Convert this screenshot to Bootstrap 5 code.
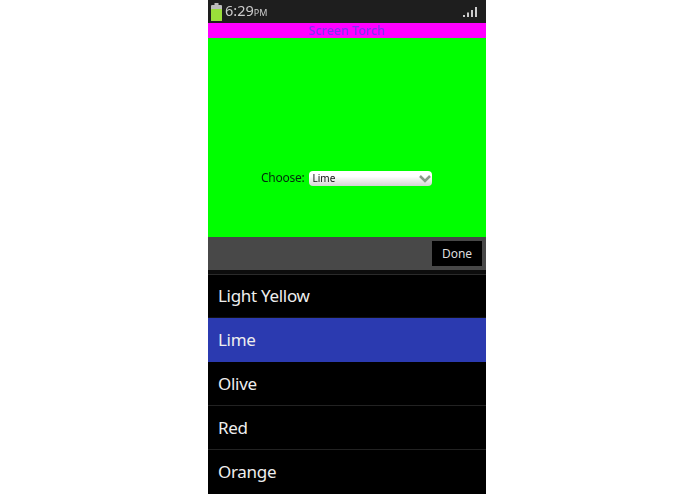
<!DOCTYPE html>
<html lang="en">
<head>
<meta charset="utf-8">
<title>Screen Torch</title>
<link href="https://cdn.jsdelivr.net/npm/bootstrap@5.3.0/dist/css/bootstrap.min.css" rel="stylesheet">
<style>
html, body { height: 100%; background: #fff; overflow: hidden; }
body { font-family: "Noto Sans", sans-serif; }
.phone { width: 278px; height: 494px; margin-left: 208px; filter: blur(0.35px); }
.statusbar { height: 23px; background: #1e1e1e; color: #ccc; padding: 0 9px 0 3px; }
.clock { font-size: 14.5px; line-height: 23px; margin-left: 3px; }
.clock small { font-size: 9px; }
.titlebar { height: 15px; background: #ff00ff; color: #7f30f0; font-size: 12.5px; font-weight: 500; line-height: 15px; text-align: center; }
.stage { height: 199px; background: #00ff00; padding-top: 130px; padding-left: 53px; gap: 4px; }
.stage-label { font-size: 12px; letter-spacing: -0.25px; line-height: 20px; color: #022a0c; }
.fake-select { width: 123px; height: 15px; border-radius: 4px; background: linear-gradient(#fff 35%, #d4d4d4); color: #111; font-size: 10px; line-height: 15px; padding-left: 4px; margin-top: 3px; }
.toolbar { height: 33px; background: #484848; padding: 4px; }
.done-btn { width: 50px; height: 25px; padding: 0; background: #000; border: 0; border-radius: 0; color: #ddd; font-size: 12px; font-family: inherit; }
.picker-gap { height: 5px; background: #0c0c0c; border-bottom: 1px solid #2a2a2a; }
.picker { background: #000; }
.pick-item { height: 44px; background: #000; color: #eee; font-size: 17px; letter-spacing: -0.3px; line-height: 44px; padding: 0 0 0 10px; border: 0; border-bottom: 1px solid #222; border-radius: 0; }
.pick-item.chosen { background: #2b3ab0; color: #eee; border-bottom-color: #2b3ab0; }
.first-item { height: 43px; line-height: 42px; border-bottom-color: #111; }
</style>
</head>
<body>
<div class="phone d-flex flex-column">
  <div class="statusbar d-flex align-items-center justify-content-between">
    <div class="d-flex align-items-center">
      <svg width="11" height="18" viewBox="0 0 11 18"><rect x="3.5" y="0" width="4" height="2" fill="#bbb"/><rect x="0" y="2" width="11" height="16" rx="1" fill="#bcbcbc"/><rect x="0" y="6" width="11" height="12" rx="1" fill="#9adf3a"/></svg>
      <span class="clock">6:29<small>PM</small></span>
    </div>
    <svg width="14" height="12" viewBox="0 0 14 12"><rect x="0" y="9" width="2" height="2" fill="#ccc"/><rect x="4" y="6.5" width="2" height="4.5" fill="#ccc"/><rect x="8" y="4" width="2" height="7" fill="#ccc"/><rect x="12" y="1" width="2" height="10" fill="#ccc"/></svg>
  </div>
  <div class="titlebar">Screen Torch</div>
  <div class="stage d-flex align-items-start">
    <span class="stage-label">Choose:</span>
    <div class="fake-select d-flex justify-content-between">
      <span>Lime</span>
      <svg width="14" height="15" viewBox="0 0 14 15"><path d="M2 5l5 5 5-5" fill="none" stroke="#8a9a8a" stroke-width="2.5"/></svg>
    </div>
  </div>
  <div class="toolbar d-flex justify-content-end">
    <button class="btn done-btn" type="button">Done</button>
  </div>
  <div class="picker-gap"></div>
  <div class="list-group list-group-flush picker">
    <div class="list-group-item pick-item first-item">Light Yellow</div>
    <div class="list-group-item pick-item chosen">Lime</div>
    <div class="list-group-item pick-item">Olive</div>
    <div class="list-group-item pick-item">Red</div>
    <div class="list-group-item pick-item">Orange</div>
  </div>
</div>
</body>
</html>
